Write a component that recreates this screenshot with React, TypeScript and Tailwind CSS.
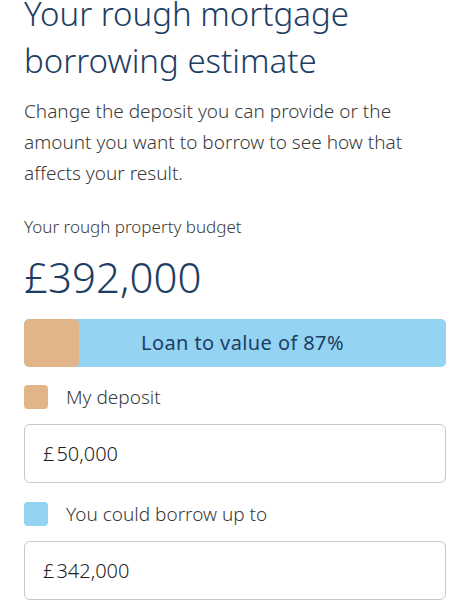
export default function App() {
  return (
    <div className="min-h-[600px] bg-white px-6 font-['Noto_Sans',sans-serif]">
      <h1 className="-mt-[10px] text-[33px] leading-[47px] font-light text-[#1d3e63]">
        Your rough mortgage borrowing estimate
      </h1>

      <p className="mt-[12px] text-[19px] leading-[31px] font-light text-[#3a3a3a]">
        Change the deposit you can provide or the amount you want to borrow to see how that affects your result.
      </p>

      <p className="mt-[26px] text-[17px] leading-[24px] font-light text-[#3a3a3a]">Your rough property budget</p>

      <div className="mt-[12px] text-[42px] leading-[52px] font-light text-[#1d3e63]">£392,000</div>

      {/* barra LTV */}
      <div className="mt-[16px] flex h-12 overflow-hidden rounded-[5px] bg-[#94d3f2]">
        <div className="w-[55px] rounded-[5px] bg-[#e2b48a]" />
        <div className="flex flex-1 items-center justify-center pr-[40px] text-[20px] tracking-[0.4px] text-[#1d3e63]">
          Loan to value of 87%
        </div>
      </div>

      <div className="mt-[18px] flex h-6 items-center gap-[18px]">
        <span className="h-6 w-6 rounded-[4px] bg-[#e2b48a]" />
        <span className="text-[19px] leading-6 font-light text-[#3a3a3a]">My deposit</span>
      </div>
      <div className="mt-[15px] flex h-[59px] items-center rounded-[6px] border border-[#c8c8c8] px-[18px] text-[20px] font-light text-[#1f1f1f]">
        £<span className="ml-[2px]">50,000</span>
      </div>

      <div className="mt-[19px] flex h-6 items-center gap-[18px]">
        <span className="h-6 w-6 rounded-[4px] bg-[#94d3f2]" />
        <span className="text-[19px] leading-6 font-light text-[#3a3a3a]">You could borrow up to</span>
      </div>
      <div className="mt-[15px] flex h-[59px] items-center rounded-[6px] border border-[#c8c8c8] px-[18px] text-[20px] font-light text-[#1f1f1f]">
        £<span className="ml-[2px]">342,000</span>
      </div>
    </div>
  )
}
